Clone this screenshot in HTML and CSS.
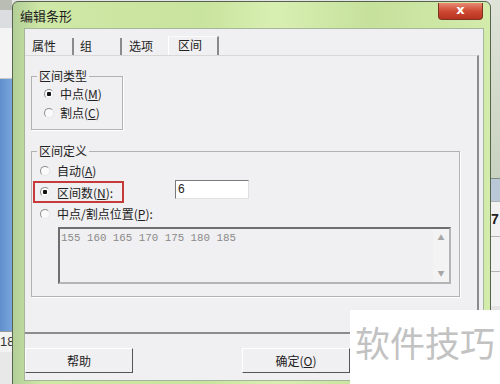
FILE: index.html
```html
<!DOCTYPE html>
<html lang="zh">
<head>
    <meta charset="UTF-8">
    <title>编辑条形</title>
    <link rel="stylesheet" href="styles.css">
</head>
<body>
    <!-- 背景里的表格窗口 -->
    <div class="desktop">
        <div class="desk-left">
            <div class="dl-top"></div>
            <div class="dl-bar"></div>
            <div class="dl-white"></div>
            <div class="dl-blue"></div>
            <div class="dl-cell">18</div>
            <div class="dl-rest"></div>
        </div>
        <div class="desk-right">
            <div class="dr-top"></div>
            <div class="dr-head"></div>
            <div class="dr-cell">7</div>
            <div class="dr-cell"></div>
            <div class="dr-cell"></div>
        </div>
    </div>

    <div class="window">
        <div class="titlebar">
            <span class="title">编辑条形</span>
            <span class="close">x</span>
        </div>
        <div class="client">
            <div class="tabs">
                <div class="tab tab-1">属性</div>
                <div class="tab tab-2">组</div>
                <div class="tab tab-3">选项</div>
                <div class="tab tab-4 active">区间</div>
            </div>
            <div class="panel">
                <fieldset class="group group-type">
                    <legend>区间类型</legend>
                    <div class="row"><span class="radio checked"></span>中点(<u>M</u>)</div>
                    <div class="row"><span class="radio"></span>割点(<u>C</u>)</div>
                </fieldset>
                <fieldset class="group group-def">
                    <legend>区间定义</legend>
                    <div class="row"><span class="radio"></span>自动(<u>A</u>)</div>
                    <div class="row row-count">
                        <span class="highlight"><span class="radio checked"></span>区间数(<u>N</u>):</span>
                        <div class="num">6</div>
                    </div>
                    <div class="row"><span class="radio"></span>中点/割点位置(<u>P</u>):</div>
                    <div class="positions">
                        <div class="positions-text">155 160 165 170 175 180 185</div>
                        <div class="scroll">
                            <span class="arrow">&#9650;</span>
                            <span class="arrow">&#9660;</span>
                        </div>
                    </div>
                </fieldset>
            </div>
            <div class="buttons">
                <div class="btn">帮助</div>
                <div class="btn">确定(<u>O</u>)</div>
            </div>
        </div>
    </div>

    <div class="watermark">软件技巧</div>
</body>
</html>
```

FILE: styles.css
```css
body {
    margin: 0;
    width: 500px;
    height: 384px;
    overflow: hidden;
    position: relative;
    font-family: "Noto Sans CJK SC", "Noto Sans", sans-serif;
    font-size: 12px;
    color: #222;
    background-color: #e4e4e4;
}

/* 背景 */
.desktop {
    display: flex;
    justify-content: space-between;
    height: 384px;
}

.desk-left {
    width: 12px;
    display: flex;
    flex-direction: column;
}

.dl-top {
    height: 10px;
    background-color: #b9bdb4;
}

.dl-bar {
    height: 18px;
    background-color: #dcdde0;
}

.dl-white {
    height: 50px;
    background-color: #f4f4f4;
    border-bottom: 1px solid #c8c8c8;
}

.dl-blue {
    height: 252px;
    background: linear-gradient(90deg, #5f8ecb, #79a5dc);
}

.dl-cell {
    height: 20px;
    border-top: 1px solid #999;
    background-color: #f2f2f2;
    font-family: "Liberation Sans", sans-serif;
    font-size: 13px;
    line-height: 20px;
    color: #333;
}

.dl-rest {
    flex: 1;
    background-color: #e8e8e8;
}

.desk-right {
    width: 9px;
    display: flex;
    flex-direction: column;
}

.dr-top {
    height: 178px;
    background: linear-gradient(#dfe3d8, #c9d2c0);
}

.dr-head {
    height: 22px;
    border-top: 1px solid #7f8c80;
    background-color: #b9c7d6;
}

.dr-cell {
    height: 34px;
    border-top: 1px solid #b4b4b4;
    background-color: #f2f2f2;
    font-family: "Liberation Sans", sans-serif;
    font-weight: bold;
    font-size: 14px;
    line-height: 34px;
    color: #222;
}

/* 对话框 */
.window {
    position: absolute;
    left: 12px;
    top: 1px;
    width: 479px;
    height: 392px;
    box-sizing: border-box;
    border: 1px solid #56634e;
    border-radius: 6px 6px 0 0;
    background: linear-gradient(90deg, #b3cf98 0%, #cfe8a6 6%, #c9e49e 40%, #d8efb2 55%, #c6e19c 75%, #d3ebab 100%);
}

.titlebar {
    height: 27px;
    display: flex;
    align-items: flex-start;
    padding-left: 7px;
}

.title {
    padding-top: 6px;
    font-size: 13px;
    line-height: 16px;
    color: #1e1e1e;
}

.close {
    margin-left: auto;
    margin-right: 7px;
    margin-top: 1px;
    width: 45px;
    height: 17px;
    box-sizing: border-box;
    border: 1px solid #7c3224;
    border-top: none;
    border-radius: 0 0 4px 4px;
    background: linear-gradient(#e98a72, #cf4a33 50%, #b8331f);
    color: #fff;
    font-family: "DejaVu Sans", sans-serif;
    font-weight: bold;
    font-size: 13px;
    line-height: 14px;
    text-align: center;
}

.client {
    margin: 0 7px 0 12px;
    height: 351px;
    background-color: #f0eff1;
    box-shadow: 0 0 0 1px #a7b59a;
}

/* 选项卡 */
.tabs {
    display: flex;
    align-items: flex-end;
    height: 22px;
    padding-top: 4px;
}

.tab {
    height: 17px;
    box-sizing: border-box;
    padding-left: 7px;
    border-right: 2px solid #8a8a8a;
    line-height: 15px;
}

.tab-1 { width: 49px; }
.tab-2 { width: 48px; padding-left: 6px; }
.tab-3 { width: 46px; border-right-color: transparent; }

.tab.active {
    width: 51px;
    height: 19px;
    padding-left: 9px;
    border-left: 1px solid #fff;
    border-top: 1px solid #fafafa;
    line-height: 16px;
}

.panel {
    width: 454px;
    height: 279px;
    box-sizing: border-box;
    border-top: 1px solid #d8d8d8;
    border-right: 2px solid #8c8c8c;
    border-bottom: 2px solid #8c8c8c;
    padding-left: 6px;
}

/* 分组框 */
.group {
    margin: 0;
    box-sizing: border-box;
    border: 1px solid #b2b2b2;
    box-shadow: 1px 1px 0 #fff;
}

.group legend {
    padding: 0 2px;
    line-height: 14px;
}

.group-type {
    margin-top: 13px;
    width: 92px;
    height: 61px;
    padding: 1px 0 0 12px;
}

.group-type legend {
    margin-left: -7px;
}

.group-type .row {
    height: 19px;
}

.group-def {
    margin-top: 14px;
    width: 429px;
    height: 153px;
    padding: 2px 0 0 8px;
}

.group-def legend {
    margin-left: -3px;
}

.row {
    display: flex;
    align-items: center;
    height: 21px;
    white-space: nowrap;
}

.row-count {
    height: 22px;
}

.radio {
    width: 10px;
    height: 10px;
    box-sizing: border-box;
    border-radius: 50%;
    border: 1px solid;
    border-color: #8e8e8e #e6e6e6 #e6e6e6 #8e8e8e;
    background-color: #fafafa;
    margin-right: 7px;
    flex-shrink: 0;
}

.group-type .radio {
    margin-right: 6px;
}

.radio.checked {
    background: radial-gradient(circle, #111 0, #111 2px, #fafafa 2.5px);
}

.highlight {
    display: flex;
    align-items: center;
    width: 91px;
    height: 22px;
    box-sizing: border-box;
    border: 2px solid #c63a3c;
    margin-left: -7px;
    padding-left: 5px;
}

.num {
    align-self: flex-start;
    margin: -1px 0 0 51px;
    width: 74px;
    height: 19px;
    box-sizing: border-box;
    border: 1px solid;
    border-color: #7a7a7a #e0e0e0 #e0e0e0 #7a7a7a;
    background-color: #fff;
    padding-left: 2px;
    font-family: "Liberation Sans", sans-serif;
    font-size: 12px;
    line-height: 17px;
}

.positions {
    display: flex;
    margin: 3px 0 0 18px;
    width: 393px;
    height: 57px;
    box-sizing: border-box;
    border: 2px solid;
    border-color: #6e6e6e #b4b4b4 #b4b4b4 #6e6e6e;
}

.positions-text {
    flex: 1;
    padding: 3px 0 0 1px;
    font-family: "Liberation Mono", monospace;
    font-size: 10.8px;
    line-height: 12px;
    color: #8a8a8a;
}

.scroll {
    width: 16px;
    display: flex;
    flex-direction: column;
    justify-content: space-between;
    align-items: center;
    padding: 4px 0 5px;
    background-color: #f3f3f4;
}

.arrow {
    font-size: 7px;
    line-height: 8px;
    color: #a6a6a6;
}

/* 按钮 */
.buttons {
    display: flex;
    gap: 109px;
    margin-top: 14px;
}

.btn {
    width: 108px;
    height: 25px;
    box-sizing: border-box;
    border: 1px solid;
    border-color: #fff #555 #555 #fff;
    text-align: center;
    line-height: 23px;
    color: #222;
}

/* 水印 */
.watermark {
    position: absolute;
    left: 350px;
    top: 310px;
    right: 0;
    bottom: 0;
    background-color: #fff;
    padding-left: 5px;
    font-size: 35px;
    line-height: 64px;
    color: #c2c2c2;
}
```
